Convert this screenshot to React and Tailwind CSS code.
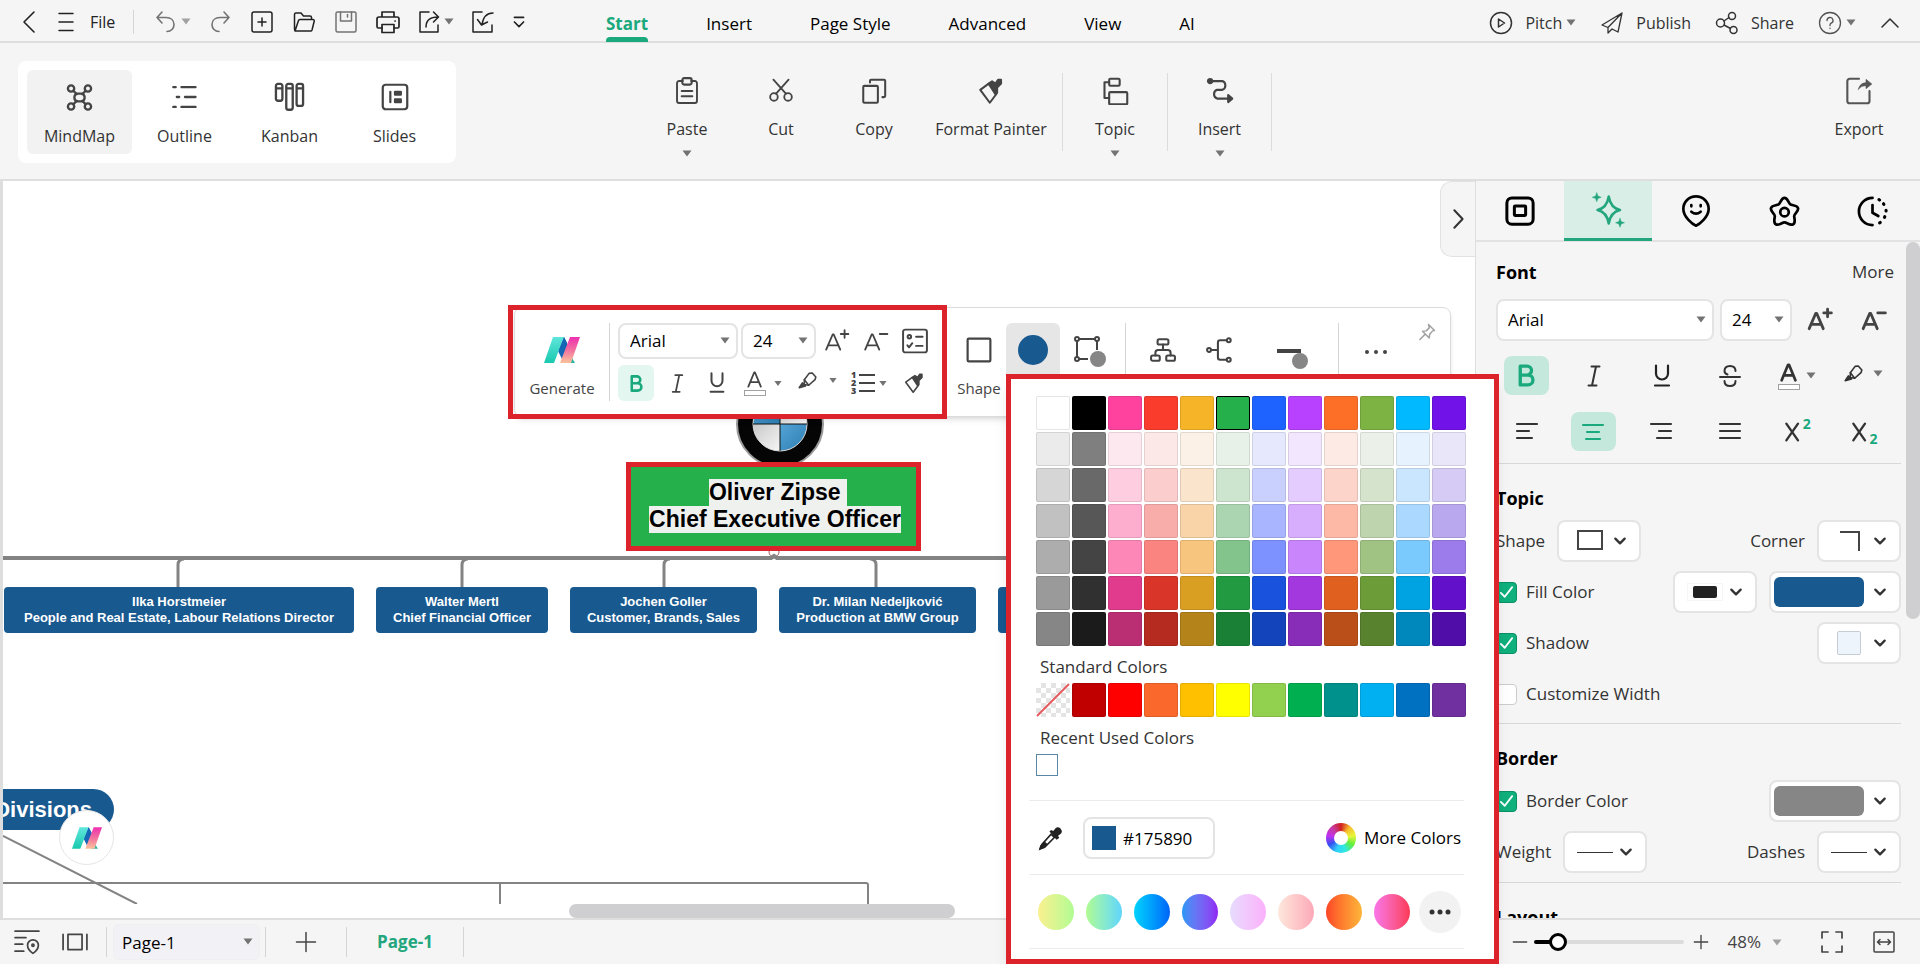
import { useState } from "react";

/**
 * Base icon wrapper. Every hand drawn icon below lives in a 24x24 box,
 * so a path only has to care about its own strokes.
 */
const Icon = ({ size = 24, sw = 1.5, className = "", children }) => (
  <svg
    width={size}
    height={size}
    viewBox="0 0 24 24"
    fill="none"
    stroke="currentColor"
    strokeWidth={sw}
    strokeLinecap="round"
    strokeLinejoin="round"
    className={`shrink-0 ${className}`}
    aria-hidden="true"
  >
    {children}
  </svg>
);

// Small filled triangle used by all the drop-downs
const Caret = ({ className = "text-neutral-500" }) => (
  <svg width="10" height="7" viewBox="0 0 10 7" fill="currentColor" className={`shrink-0 ${className}`} aria-hidden="true">
    <path d="M0.5 0.5h9L5 6.5z" />
  </svg>
);

const Chevron = () => (
  <Icon size={14} sw={4} className="text-[#333]">
    <path d="M4 8l8 8 8-8" />
  </Icon>
);

// Brand mark: teal left stroke, blue fold, pink right stroke
const Logo = ({ id, className }) => (
  <svg viewBox="0 0 36 26" className={className} aria-hidden="true">
    <defs>
      <linearGradient id={`${id}-teal`} x1="0" y1="0" x2="0" y2="1">
        <stop offset="0" stopColor="#5ee6dc" />
        <stop offset="1" stopColor="#19c9ae" />
      </linearGradient>
      <linearGradient id={`${id}-pink`} x1="0" y1="0" x2="0" y2="1">
        <stop offset="0" stopColor="#ee2fb0" />
        <stop offset="0.5" stopColor="#f2719f" />
        <stop offset="1" stopColor="#fbc39a" />
      </linearGradient>
    </defs>
    <path d="M24 14l7 12h-8z" fill="#2bb3a3" />
    <path d="M20 0l4 8-6 14-4-8z" fill="#1566b5" />
    <path d="M9 0h11L10 26H0z" fill={`url(#${id}-teal)`} />
    <path d="M20 0l3 6-5 13-3-6z" fill="#1566b5" />
    <path d="M26 0h10L27 26H16z" fill={`url(#${id}-pink)`} />
  </svg>
);

/* ---------- shared drawings ---------- */

const Brush = ({ size = 24 }) => (
  <Icon size={size} sw={1.8}>
    <path d="M2 10.500L9.500 5l7 9-6 8z" />
    <path d="M9.500 5l3-2 3 2 2.500-3.500h2.500V5L17 8.500v4.500l-1.500 1.500z" fill="currentColor" />
  </Icon>
);

const Highlighter = ({ size = 20 }) => (
  <Icon size={size} sw={2}>
    <path d="M8 11l6-8 4-.500 4.500 5-1 3.500-8 7-5.500-1z" />
    <path d="M8 11l5.500 7" />
    <path d="M5.500 15l4 4-8 2z" fill="currentColor" />
  </Icon>
);

const LetterA = ({ sw = 2, size = 24 }) => (
  <Icon size={size} sw={sw}>
    <path d="M4 20L11 3h1l7 17M6.500 14.500h10" />
  </Icon>
);

const FontUp = ({ sw = 1.8 }) => (
  <Icon size={26} sw={sw}>
    <path d="M2 20L8 6h1l6 14M4 16h9M19 2v7M15.500 5.500h7" />
  </Icon>
);

const FontDown = ({ sw = 1.8 }) => (
  <Icon size={26} sw={sw}>
    <path d="M2 20L8 6h1l6 14M4 16h9M15.500 5.500h7" />
  </Icon>
);

const Bold = ({ size = 24 }) => (
  <Icon size={size} sw={3.200}>
    <path d="M6 3h6.500a4.300 4.300 0 0 1 0 8.600H6zM6 11.600h7.500a4.600 4.600 0 0 1 0 9.400H6z" />
  </Icon>
);

const Italic = ({ size = 24 }) => (
  <Icon size={size} sw={2}>
    <path d="M9.500 2.500h8M6.500 21.500h8M14 2.500L10 21.500" />
  </Icon>
);

const Underline = ({ size = 24 }) => (
  <Icon size={size} sw={2.2}>
    <path d="M6 1.500V9.500a6 6 0 0 0 12 0V1.500M5 21.500h14" />
  </Icon>
);

/* ---------- header ---------- */

const IconButton = ({ label, className = "", children, ...rest }) => (
  <button type="button" aria-label={label} className={`flex items-center justify-center ${className}`} {...rest}>
    {children}
  </button>
);

const TABS = ["Start", "Insert", "Page Style", "Advanced", "View", "AI"];

const Header = () => {
  const [tab, setTab] = useState("Start");

  return (
    <header className="flex h-[43px] shrink-0 items-center border-b-2 border-[#dedede] text-[#222]">
      <div className="flex w-[606px] shrink-0 items-center pl-[17px] pt-0.5">
        <IconButton label="Back" className="w-6">
          <Icon sw={1.6}><path d="M17 2L7 12l10 10" /></Icon>
        </IconButton>
        <button type="button" className="ml-[13px] flex items-center gap-3">
          <Icon><path d="M5 3.500h14M5 12h14M5 20.500h14" /></Icon>
          File
        </button>
        <span className="ml-[18px] h-6 w-px bg-[#d5d5d5]" />
        <IconButton label="Undo" className="ml-5 w-6 text-neutral-500">
          <Icon sw={1.6}><path d="M8 2L3 7.500 8 13M3 7.500h9c5 0 8 3 8 7s-3 7-7 7" /></Icon>
        </IconButton>
        <IconButton label="Undo history" className="w-4"><Caret className="text-neutral-400" /></IconButton>
        <IconButton label="Redo" className="ml-3.5 w-6 text-neutral-500">
          <Icon sw={1.6}><path d="M16 2l5 5.500-5 5.500M21 7.500h-9c-5 0-8 3-8 7s3 7 7 7" /></Icon>
        </IconButton>
        <IconButton label="New" className="ml-[18px] w-6">
          <Icon><rect x="2" y="2" width="20" height="20" rx="2" /><path d="M12 8v8M8 12h8" /></Icon>
        </IconButton>
        <IconButton label="Open" className="ml-[18px] w-6">
          <Icon><path d="M2.500 19V4.500a1.500 1.500 0 0 1 1.500-1.500h5l2.500 3H18a1.500 1.500 0 0 1 1.500 1.500V9.500M3 21l3.500-10.500a1.500 1.500 0 0 1 1.500-1h13a1.300 1.300 0 0 1 1.200 1.800L20 20a1.500 1.500 0 0 1-1.500 1H4a1.500 1.500 0 0 1-1.500-1.500" /></Icon>
        </IconButton>
        <IconButton label="Save" className="ml-[18px] w-6 text-neutral-500">
          <Icon><rect x="2" y="2" width="20" height="20" rx="1.500" /><path d="M6.500 2v9h11V2M13.500 4.500V7" /></Icon>
        </IconButton>
        <IconButton label="Print" className="ml-[18px] w-6">
          <Icon sw={1.700}><path d="M6 7V2h12v5M6 18H2.500a1.500 1.500 0 0 1-1.500-1.500V9a2 2 0 0 1 2-2h18a2 2 0 0 1 2 2v7.500a1.500 1.500 0 0 1-1.500 1.500H18M19 11h.2" /><rect x="6" y="14.500" width="12" height="8" /></Icon>
        </IconButton>
        <IconButton label="Share file" className="ml-[17px] w-6">
          <Icon><path d="M12 2H3v20h18v-7M9 17c0-6 3-10 12-10M16.500 2l5 5-5 5" /></Icon>
        </IconButton>
        <IconButton label="Share file options" className="w-4"><Caret /></IconButton>
        <IconButton label="Import" className="ml-3.5 w-6">
          <Icon><path d="M11 2H2v20h19v-7M22 3c-6 0-10 4-11 12M6.500 9.500l4 5.500 6-3" /></Icon>
        </IconButton>
        <IconButton label="More commands" className="ml-3.5 w-5">
          <Icon size={22} sw={1.8}><path d="M7 7h10M7 12l5 5 5-5" /></Icon>
        </IconButton>
      </div>

      <nav className="flex h-full gap-[58px] text-[17px]">
        {TABS.map((name) => (
          <button
            key={name}
            type="button"
            onClick={() => setTab(name)}
            className={`relative flex h-full items-center pt-1.5 ${tab === name ? "font-bold text-[#19a97c]" : "text-black"}`}
          >
            {name}
            {tab === name && <span className="absolute inset-x-0 -bottom-px h-[5px] rounded-t bg-[#19a97c]" />}
          </button>
        ))}
      </nav>

      <div className="ml-auto flex items-center pr-[18px] pt-1 text-[#333]">
        <button type="button" className="flex items-center">
          <Icon><circle cx="12" cy="12" r="10.500" /><path d="M9.500 8l6 4-6 4z" /></Icon>
          <span className="ml-3">Pitch</span>
          <Caret className="ml-1 text-neutral-500" />
        </button>
        <button type="button" className="ml-6 flex items-center gap-3">
          <Icon sw={1.3}><path d="M22 2L2 14l6 2.500L22 2l-4 19-6-3M8 16.500V22l4-4" /></Icon>
          Publish
        </button>
        <button type="button" className="ml-6 flex items-center gap-3">
          <Icon><circle cx="5.500" cy="12" r="4" /><circle cx="17" cy="5" r="3.500" /><circle cx="18.500" cy="19" r="3.500" /><path d="M9 10l5-3.500M9 14l6.500 3.500" /></Icon>
          Share
        </button>
        <button type="button" aria-label="Help" className="ml-6 flex items-center gap-1 text-neutral-600">
          <Icon sw={1.3}><circle cx="12" cy="12" r="10.500" /><path d="M9 9.500a3 3 0 1 1 4.200 2.700c-.8.400-1.200.9-1.200 1.800v.5M12 17.200v.2" /></Icon>
          <Caret />
        </button>
        <IconButton label="Collapse ribbon" className="ml-[22px] w-6">
          <Icon sw={1.6}><path d="M4 16l8-8 8 8" /></Icon>
        </IconButton>
      </div>
    </header>
  );
};

/* ---------- ribbon ---------- */

const VIEWS = [
  {
    name: "MindMap",
    icon: (
      <Icon size={27} sw={2.1}>
        <circle cx="4.500" cy="4" r="2.800" /><circle cx="19.500" cy="4" r="2.800" /><circle cx="4.500" cy="20" r="2.800" /><circle cx="19.500" cy="20" r="2.800" />
        <rect x="7.500" y="8.500" width="9" height="7" rx="3" /><path d="M6.500 6l3 3M17.500 6l-3 3M6.500 18l3-3M17.500 18l-3-3" />
      </Icon>
    ),
  },
  {
    name: "Outline",
    icon: <Icon size={28} sw={2}><path d="M2 3.500h2M9 3.500h12M5 12h2M12 12h9M2 20.500h2M9 20.500h12" /></Icon>,
  },
  {
    name: "Kanban",
    icon: (
      <Icon size={31} sw={1.8}>
        <rect x="1.500" y="1.500" width="5" height="13" rx="1.500" /><rect x="9.500" y="1.500" width="5" height="20" rx="1.500" /><rect x="17.500" y="1.500" width="5" height="17" rx="1.500" />
        <path d="M2 5h4M10 5h4M18 5h4" />
      </Icon>
    ),
  },
  {
    name: "Slides",
    icon: (
      <Icon size={28} sw={1.9}>
        <rect x="1.500" y="1.500" width="21" height="21" rx="2.500" /><path d="M8 7.500v9" />
        <rect x="12" y="7.500" width="5" height="2.500" fill="currentColor" /><rect x="12" y="14" width="5" height="2.500" fill="currentColor" />
      </Icon>
    ),
  },
];

const TOOLS = [
  {
    name: "Paste", width: "w-[94px]", menu: true,
    icon: <Icon size={28} sw={1.8}><path d="M8 3.500H4.500a2 2 0 0 0-2 2V21a2 2 0 0 0 2 2h15a2 2 0 0 0 2-2V5.500a2 2 0 0 0-2-2H16" transform="translate(1.200 0) scale(.9 .97)" /><rect x="8" y="1" width="8" height="5.500" rx="1.500" /><path d="M7.500 12h9M7.500 16.500h9" /></Icon>,
  },
  {
    name: "Cut", width: "w-[94px]",
    icon: <Icon size={26} sw={1.700}><circle cx="5.500" cy="17.500" r="3.500" /><circle cx="18.500" cy="17.500" r="3.500" /><path d="M5 1.500l11.500 13M19 1.500L7.500 14.500" /></Icon>,
  },
  {
    name: "Copy", width: "w-[92px]",
    icon: <Icon size={27} sw={1.8}><rect x="2" y="7" width="13" height="15" rx="1" /><path d="M8 4V2.500a1 1 0 0 1 1-1h11.500a1 1 0 0 1 1 1V16a1 1 0 0 1-1 1H19" /></Icon>,
  },
  { name: "Format Painter", width: "w-[142px]", icon: <Brush size={27} /> },
  {
    name: "Topic", width: "w-[104px]", menu: true, divided: true,
    icon: <Icon size={28} sw={1.8}><rect x="7" y="1.500" width="9" height="6" rx="1" /><rect x="7" y="13" width="15.500" height="10.500" rx="1" /><path d="M7 4.500H3V18h4" /></Icon>,
  },
  {
    name: "Insert", width: "w-[103px]", menu: true, divided: true,
    icon: <Icon size={28} sw={1.8}><circle cx="3.500" cy="3.500" r="1.800" fill="currentColor" /><path d="M4 3.500h10a4 4 0 0 1 0 7.500H9.500a4 4 0 0 0 0 7.500H20" /><path d="M19 15.500l3.500 3-3.500 3z" fill="currentColor" /></Icon>,
  },
];

const Ribbon = () => {
  const [view, setView] = useState("MindMap");

  return (
    <section aria-label="Ribbon" className="flex h-[138px] shrink-0 items-start border-b-2 border-[#dedede] text-[#333]">
      <div className="w-[640px] shrink-0 pl-[18px] pt-[18px]">
        <div className="inline-flex rounded-lg bg-white p-[9px]">
          {VIEWS.map(({ name, icon }) => (
            <button
              key={name}
              type="button"
              onClick={() => setView(name)}
              className={`flex h-[84px] w-[105px] flex-col items-center justify-between rounded-md pb-1.5 pt-[11px] ${view === name ? "bg-[#f2f2f2]" : ""}`}
            >
              <span className="flex h-8 items-center text-[#444]">{icon}</span>
              {name}
            </button>
          ))}
        </div>
      </div>

      <div className="flex pt-[30px]">
        {TOOLS.map(({ name, width, icon, menu, divided }) => (
          <div key={name} className={`flex ${divided ? "border-l border-[#dcdcdc]" : ""} ${name === "Insert" ? "border-r" : ""}`}>
            <button type="button" className={`flex h-[78px] flex-col items-center ${width}`}>
              <span className="mt-1 flex h-7 items-center text-[#444]">{icon}</span>
              <span className="mt-3 whitespace-nowrap leading-6">{name}</span>
              {menu && <Caret className="mt-[9px] text-neutral-500" />}
            </button>
          </div>
        ))}
      </div>

      <button type="button" className="ml-auto mr-[21px] flex w-20 flex-col items-center pt-[34px]">
        <Icon size={28} sw={1.8} className="text-[#555]">
          <path d="M12 1.500H4a2 2 0 0 0-2 2v17a2 2 0 0 0 2 2h15a2 2 0 0 0 2-2V12" />
          <path d="M11.500 10.500c1-4 3.500-5.500 6.500-5.500V2l5 4-5 4V7.500c-3 0-5 1-6.500 3z" fill="currentColor" strokeWidth="0.5" />
        </Icon>
        <span className="mt-3 leading-6">Export</span>
      </button>
    </section>
  );
};

/* ---------- canvas ---------- */

const NODES = [
  { name: "Ilka Horstmeier", role: "People and Real Estate, Labour Relations Director", box: "left-px w-[350px]" },
  { name: "Walter Mertl", role: "Chief Financial Officer", box: "left-[373px] w-[172px]" },
  { name: "Jochen Goller", role: "Customer, Brands, Sales", box: "left-[567px] w-[187px]" },
  { name: "Dr. Milan Nedeljković", role: "Production at BMW Group", box: "left-[776px] w-[197px]" },
  { name: "", role: "", box: "left-[995px] w-[190px]" },
];

const Canvas = () => (
  <main className="relative min-w-0 flex-1 overflow-hidden border-l-[3px] border-[#dedede] bg-white font-['Liberation_Sans',Arial,sans-serif]">
    {/* connector lines */}
    <svg className="absolute left-0 top-0" width="1200" height="723" fill="none" stroke="#838383" aria-hidden="true">
      <path d="M0 377h1200" strokeWidth="4" />
      <path d="M175 406v-22q0-6 6-6M459 406v-22q0-6 6-6M661 406v-22q0-6 6-6M873 406v-22q0-6-6-6" strokeWidth="3" />
      <circle cx="771" cy="371" r="5" stroke="#b05a5a" strokeWidth="1" />
      <path d="M764 378h14l-7-5z" fill="#838383" strokeWidth="1" />
      <path d="M768 380h6l-3-2z" fill="#fff" stroke="#fff" strokeWidth="1" />
      <path d="M0 655l134 68M0 702h863q2 0 2 2v19M497 702v21" strokeWidth="2" />
    </svg>

    {/* company roundel, partly behind the floating toolbar */}
    <svg className="absolute left-[732px] top-[198px]" width="90" height="90" viewBox="-45 -45 90 90" aria-hidden="true">
      <defs>
        <linearGradient id="sky" x1="0" y1="0" x2="1" y2="1"><stop offset="0" stopColor="#55a4d6" /><stop offset="1" stopColor="#2c7db2" /></linearGradient>
        <linearGradient id="snow" x1="0" y1="0" x2="1" y2="1"><stop offset="0" stopColor="#c8c8c8" /><stop offset="1" stopColor="#f6f6f6" /></linearGradient>
      </defs>
      <circle r="43" fill="#050505" stroke="#9a9a9a" strokeWidth="2" />
      <path d="M0 0h-27a27 27 0 0 1 27-27z" fill="url(#sky)" />
      <path d="M0 0v-27a27 27 0 0 1 27 27z" fill="url(#snow)" />
      <path d="M0 0h27a27 27 0 0 1-27 27z" fill="url(#sky)" />
      <path d="M0 0v27a27 27 0 0 1-27-27z" fill="url(#snow)" />
      <circle r="27" fill="none" stroke="#ddd" />
      <path d="M-27 0h54M0-27v54" stroke="#111" />
    </svg>

    <div className="absolute left-[623px] top-[281px] flex h-[89px] w-[295px] flex-col items-center justify-center border-[5px] border-[#dc222b] bg-[#26b04b] pb-0.5 pl-[3px] text-center text-[23px] font-bold leading-[27px] text-black">
      <span className="-mr-1.5 whitespace-pre bg-[#eff1ef]">{"Oliver Zipse "}</span>
      <span className="whitespace-nowrap bg-[#eff1ef]">Chief Executive Officer</span>
    </div>

    {NODES.map(({ name, role, box }) => (
      <div
        key={box}
        className={`absolute top-[406px] flex h-[46px] flex-col items-center justify-center whitespace-nowrap rounded-sm bg-[#185990] text-[13px] font-bold leading-4 text-white ${box}`}
      >
        <span>{name}</span>
        <span>{role}</span>
      </div>
    ))}

    <div className="absolute -left-10 top-[608px] flex h-[41px] w-[151px] items-center justify-end rounded-r-full bg-[#185990] pr-[22px] text-[22px] font-bold text-white">
      Divisions
    </div>
    <button type="button" aria-label="AI assistant" className="absolute left-14 top-[629px] flex h-[55px] w-[55px] items-center justify-center rounded-full border border-neutral-200 bg-white">
      <Logo id="bubble" className="h-[22px] w-[30px]" />
    </button>

    {/* horizontal scrollbar */}
    <div className="absolute bottom-0 left-[566px] h-3.5 w-[386px] rounded-full bg-[#cfcfd1]" />

    <button type="button" aria-label="Hide panel" className="absolute right-0 top-0 flex h-[76px] w-[35px] items-center justify-center rounded-l-xl border border-r-0 border-[#e2e2e2] bg-[#f5f5f5] text-[#333]">
      <Icon size={22} sw={2.2}><path d="M8 2.500l9 9.500-9 9.500" /></Icon>
    </button>
  </main>
);

/* ---------- format panel ---------- */

const SelectBox = ({ label, options, className = "" }) => (
  <div className={`relative rounded-lg border-2 border-[#e4e4e4] bg-white text-[17px] text-black ${className}`}>
    <select aria-label={label} className="h-full w-full appearance-none bg-transparent pl-2.5 outline-none">
      {options.map((o) => <option key={o}>{o}</option>)}
    </select>
    <Caret className="pointer-events-none absolute right-1.5 top-1/2 -mt-1 text-neutral-500" />
  </div>
);

// Drop-down that previews its value as a drawing instead of text
const PreviewSelect = ({ label, wide, className = "", children }) => (
  <button
    type="button"
    aria-label={label}
    aria-haspopup="listbox"
    className={`flex h-[42px] shrink-0 items-center justify-between rounded-lg border-2 border-[#e4e4e4] bg-white pr-3 ${wide ? "w-[132px] pl-[3px]" : "w-[84px] pl-3"} ${className}`}
  >
    {children}
    <Chevron />
  </button>
);

const Check = ({ label, defaultChecked }) => (
  <label className="flex items-center gap-[9px]">
    <span className="relative flex">
      <input
        type="checkbox"
        defaultChecked={defaultChecked}
        className="peer size-[21px] appearance-none rounded border border-[#ccc] bg-white checked:border-[#0b8f66] checked:bg-[#0fb07c]"
      />
      <Icon size={17} sw={2.6} className="pointer-events-none absolute left-0.5 top-0.5 hidden text-white peer-checked:block">
        <path d="M4 12.500l5.500 5.500L20 4.500" />
      </Icon>
    </span>
    {label}
  </label>
);

const PANEL_TABS = [
  { name: "Page", icon: <Icon size={30} sw={2.4}><rect x="1.500" y="1.500" width="21" height="21" rx="4" /><rect x="7.500" y="8" width="9" height="7.500" rx="0.500" /></Icon> },
  {
    name: "Style",
    icon: (
      <Icon size={36} sw={1.7}>
        <path d="M12.500 3c.8 5 3 8 7.500 9-4.500 1-6.700 4-7.500 9-.8-5-3-8-7.500-9 4.500-1 6.700-4 7.500-9z" />
        <path d="M4.500.500l.8 2.200 2.200.8-2.200.8-.8 2.200-.8-2.200-2.200-.8 2.200-.8zM20 17.500l.8 2.200 2.200.8-2.200.8-.8 2.200-.8-2.200-2.200-.8 2.200-.8z" fill="currentColor" strokeWidth="0.300" />
      </Icon>
    ),
  },
  { name: "Mark", icon: <Icon size={32} sw={2}><path d="M12 23c-2.500-1-9.500-6.500-9.500-12.500a9.500 9.500 0 0 1 19 0C21.500 16.500 14.500 22 12 23z" /><path d="M8.500 7.500v1M15.500 7.500v1M8.500 12.500q3.500 3 7 0" /></Icon> },
  { name: "Clipart", icon: <Icon size={31} sw={2.1}><path d="M12 1.500c2.500 0 3 4 4.500 5s5.500.500 6 3-3 4-3 6 1.500 5.500-1 6.500-4.500-1.500-6.500-1.500S8 23 5.500 22s-1-4.500-1-6.500-3.500-3.500-3-6 4.500-2 6-3 2-5 4.500-5z" /><circle cx="12" cy="12.500" r="3.300" /></Icon> },
  { name: "History", icon: <Icon size={31} sw={2.1}><path d="M12 1.500a10.500 10.500 0 1 0 0 21M12 7v6l4.500 2.500" /><path d="M17 2.800l.5.300M20.500 6l.3.500M22.500 11v.6M21.500 16l-.2.500M18 20.500l-.5.300" strokeWidth="2.400" /></Icon> },
];

const FormatPanel = () => {
  const [active, setActive] = useState("Style");

  return (
    <aside className="relative flex w-[445px] shrink-0 flex-col overflow-hidden border-l border-[#dedede] text-[17px] leading-6 text-[#333]">
      <div className="flex h-[61px] shrink-0 border-b-2 border-[#e2e2e2]">
        {PANEL_TABS.map(({ name, icon }) => (
          <IconButton
            key={name}
            label={name}
            onClick={() => setActive(name)}
            className={`h-[60px] w-[88px] ${active === name ? "border-b-[3px] border-[#23a67d] bg-[#daeee8] text-[#23a67d]" : "text-black"}`}
          >
            {icon}
          </IconButton>
        ))}
      </div>

      <div className="min-h-0 flex-1 overflow-hidden pl-5 pr-[19px]">
        {/* Font */}
        <div className="flex h-[57px] items-center justify-between pr-[7px] pt-0.5">
          <h2 className="text-lg font-bold leading-6 text-black">Font</h2>
          <button type="button">More</button>
        </div>
        <div className="flex items-center">
          <SelectBox label="Font family" options={["Arial", "Roboto"]} className="h-[42px] w-[219px]" />
          <SelectBox label="Font size" options={["24", "18", "12"]} className="ml-1.5 h-[42px] w-[72px]" />
          <IconButton label="Increase font size" className="ml-0.5 w-[54px] text-[#444]"><FontUp sw={2.6} /></IconButton>
          <IconButton label="Decrease font size" className="w-[54px] text-[#444]"><FontDown sw={2.6} /></IconButton>
        </div>

        <div className="mt-[15px] grid h-[39px] grid-cols-6 pr-1">
          <IconButton label="Bold" className="ml-2 w-[45px] rounded-lg bg-[#c4e8dc] text-[#19a97c]"><Bold size={25} /></IconButton>
          <IconButton label="Italic" className="pr-1"><Italic size={24} /></IconButton>
          <IconButton label="Underline" className="pr-0.5 text-[#222]"><Underline size={24} /></IconButton>
          <IconButton label="Strikethrough">
            <Icon size={24} sw={2}><path d="M17.500 7c0-3-2-5-5.500-5S6.500 4 6.500 7c0 2 1.500 3 3 3.500M17.500 17c0 3-2 5-5.500 5s-5.500-2-5.500-5M2 13h20" /></Icon>
          </IconButton>
          <IconButton label="Font colour" className="gap-1.5">
            <span className="flex flex-col items-center"><LetterA size={22} sw={3} /><span className="h-1.5 w-[22px] border border-neutral-400 bg-white" /></span>
            <Caret />
          </IconButton>
          <IconButton label="Highlight" className="gap-2.5 pb-1"><Highlighter size={19} /><Caret /></IconButton>
        </div>

        <div className="mt-[17px] grid h-[39px] grid-cols-6 pr-1">
          <IconButton label="Align left"><Icon sw={2.1} className="-ml-1"><path d="M2 4h20M2 11h12M2 18h15" /></Icon></IconButton>
          <IconButton label="Align centre" className="ml-2 w-[45px] rounded-lg bg-[#c4e8dc] text-[#19a97c]"><Icon sw={2.1}><path d="M2 5h20M6 12h12M5 19h14" /></Icon></IconButton>
          <IconButton label="Align right"><Icon sw={2.1} className="-ml-1"><path d="M2 4h20M10 11h12M8 18h14" /></Icon></IconButton>
          <IconButton label="Justify"><Icon sw={2.1}><path d="M2 4h20M2 11h20M2 18h20" /></Icon></IconButton>
          <IconButton label="Superscript" className="font-bold">
            <Icon size={20} sw={2.8}><path d="M4 2l14 20M18 2L4 22" /></Icon>
            <span className="-mt-4 text-sm text-[#19a97c]">2</span>
          </IconButton>
          <IconButton label="Subscript" className="font-bold">
            <Icon size={20} sw={2.8}><path d="M4 2l14 20M18 2L4 22" /></Icon>
            <span className="mt-3.5 text-sm text-[#19a97c]">2</span>
          </IconButton>
        </div>

        {/* Topic */}
        <section className="mt-3 border-t border-[#d8d8d8] pt-[22px]">
          <h2 className="text-lg font-bold leading-6 text-black">Topic</h2>
          <div className="mt-2.5 flex h-[42px] items-center">
            Shape
            <PreviewSelect label="Shape" className="ml-3">
              <svg width="28" height="22" fill="none" stroke="#444" strokeWidth="2" className="ml-1.5"><rect x="1" y="1" width="24" height="18" /></svg>
            </PreviewSelect>
            <span className="ml-auto">Corner</span>
            <PreviewSelect label="Corner" className="ml-3">
              <svg width="28" height="22" fill="none" stroke="#444" strokeWidth="2" className="ml-2"><path d="M1 2h19v19" /></svg>
            </PreviewSelect>
          </div>
          <div className="mt-[9px] flex h-[42px] items-center">
            <Check label="Fill Color" defaultChecked />
            <PreviewSelect label="Fill pattern" className="ml-auto">
              <span className="border border-neutral-100 px-[5px] py-0.5"><span className="block h-3 w-6 rounded-xs bg-[#222]" /></span>
            </PreviewSelect>
            <PreviewSelect label="Fill color" wide className="ml-3"><span className="h-[30px] w-[90px] rounded-md bg-[#185990]" /></PreviewSelect>
          </div>
          <div className="mt-[9px] flex h-[42px] items-center justify-between">
            <Check label="Shadow" defaultChecked />
            <PreviewSelect label="Shadow style">
              <span className="ml-1.5 size-6 rounded-xs border border-[#c5ccd4] bg-[#edf4fc]" />
            </PreviewSelect>
          </div>
          <div className="mt-[9px] flex h-[42px] items-center">
            <Check label="Customize Width" />
          </div>
        </section>

        {/* Border */}
        <section className="mt-2 border-t border-[#d8d8d8] pt-[22px]">
          <h2 className="text-lg font-bold leading-6 text-black">Border</h2>
          <div className="mt-2.5 flex h-[42px] items-center justify-between">
            <Check label="Border Color" defaultChecked />
            <PreviewSelect label="Border color" wide><span className="h-[30px] w-[90px] rounded-md bg-[#868686]" /></PreviewSelect>
          </div>
          <div className="mt-[9px] flex h-[42px] items-center">
            Weight
            <PreviewSelect label="Weight" className="ml-3"><span className="h-px w-9 bg-[#333]" /></PreviewSelect>
            <span className="ml-auto">Dashes</span>
            <PreviewSelect label="Dashes" className="ml-3"><span className="h-px w-9 bg-[#333]" /></PreviewSelect>
          </div>
        </section>

        <section className="mt-[9px] border-t border-[#d8d8d8] pt-[22px]">
          <h2 className="text-lg font-bold leading-6 text-black">Layout</h2>
        </section>
      </div>

      <div className="absolute right-0 top-[61px] h-[377px] w-3.5 rounded-full bg-[#cfcfd1]" />
    </aside>
  );
};

/* ---------- status bar ---------- */

const Divider = ({ className = "h-[30px]" }) => <span className={`w-px shrink-0 bg-[#d5d5d5] ${className}`} />;

const StatusBar = () => {
  const [zoom, setZoom] = useState(48);

  return (
    <footer className="flex h-[46px] shrink-0 items-center border-t-2 border-[#dedede] text-[17px] text-[#444]">
      <IconButton label="Locate" className="ml-3.5 w-[26px]">
        <Icon size={26} sw={1.6}><path d="M1 2h22M1 8h10M1 14h7M1 20.500h8" /><path d="M17.500 22.500c-3-2-5-4.500-5-7.500a5 5 0 0 1 10 0c0 3-2 5.500-5 7.500z" /><circle cx="17.500" cy="15" r="1" /></Icon>
      </IconButton>
      <IconButton label="Presentation" className="ml-[22px] w-[26px]">
        <Icon size={26} sw={1.6}><rect x="5.500" y="5" width="13" height="14" /><path d="M1 5v14M23 5v14" /></Icon>
      </IconButton>
      <Divider className="ml-[18px] h-[30px]" />
      <div className="relative ml-1.5 h-9 w-[147px] rounded-md border border-[#efeff2] bg-[#f2f1f5] text-black">
        <select aria-label="Page" className="h-full w-full appearance-none bg-transparent pl-2 pt-0.5 outline-none">
          <option>Page-1</option>
        </select>
        <Caret className="pointer-events-none absolute right-1.5 top-1/2 -mt-1 text-neutral-500" />
      </div>
      <Divider className="ml-[5px] h-[30px]" />
      <IconButton label="Add page" className="w-20">
        <Icon sw={1.5}><path d="M12 2.500v19M2.500 12h19" /></Icon>
      </IconButton>
      <Divider />
      <button type="button" className="w-[116px] font-bold text-[#23a67d]">Page-1</button>
      <Divider />

      <div className="ml-auto flex items-center pr-6">
        <IconButton label="Zoom out" className="w-4" onClick={() => setZoom(zoom - 10)}>
          <Icon size={16} sw={2}><path d="M2 12h20" /></Icon>
        </IconButton>
        <input
          type="range"
          aria-label="Zoom"
          min="0"
          max="450"
          value={zoom}
          onChange={(e) => setZoom(Number(e.target.value))}
          className="mx-1.5 h-1 w-[150px] appearance-none rounded-full bg-[linear-gradient(90deg,#000_12%,#dcdcdc_12%)] [&::-webkit-slider-thumb]:size-[18px] [&::-webkit-slider-thumb]:appearance-none [&::-webkit-slider-thumb]:rounded-full [&::-webkit-slider-thumb]:border-[3px] [&::-webkit-slider-thumb]:border-black [&::-webkit-slider-thumb]:bg-white"
        />
        <IconButton label="Zoom in" className="ml-[3px] w-4" onClick={() => setZoom(zoom + 10)}>
          <Icon size={16} sw={2}><path d="M2 12h20M12 2v20" /></Icon>
        </IconButton>
        <button type="button" className="ml-[18px] flex items-center gap-[11px]">
          {zoom}%
          <Caret className="text-neutral-400" />
        </button>
        <IconButton label="Full screen" className="ml-[38px] w-6">
          <Icon sw={1.7}><path d="M2 8V2h6M16 2h6v6M22 16v6h-6M8 22H2v-6" /></Icon>
        </IconButton>
        <IconButton label="Fit width" className="ml-7 w-6">
          <Icon sw={1.5}><rect x="2" y="2" width="20" height="20" rx="1" /><path d="M6 12h12M8 9.500L5.500 12 8 14.500M16 9.500l2.500 2.500-2.500 2.500" /></Icon>
        </IconButton>
      </div>
    </footer>
  );
};

/* ---------- floating toolbar ---------- */

const FloatingToolbar = () => (
  <>
    <div className="absolute left-[514px] top-[307px] flex h-[110px] w-[937px] rounded-lg border border-[#dcdcdc] bg-white text-[15px] text-[#444] shadow-md">
      <button type="button" className="flex w-[94px] flex-col items-center pt-[29px]">
        <Logo id="generate" className="h-[26px] w-9" />
        <span className="mt-[15px] leading-5">Generate</span>
      </button>
      <Divider className="mt-[15px] h-[78px]" />

      <div className="ml-2 mt-[15px] flex w-[316px] flex-col gap-1.5">
        <div className="flex h-9 items-center">
          <SelectBox label="Font family" options={["Arial", "Roboto"]} className="h-9 w-[120px]" />
          <SelectBox label="Font size" options={["24", "18", "12"]} className="ml-[3px] mr-0.5 h-9 w-[75px]" />
          <IconButton label="Increase font size" className="w-[38px]"><FontUp sw={1.7} /></IconButton>
          <IconButton label="Decrease font size" className="w-[39px]"><FontDown sw={1.7} /></IconButton>
          <IconButton label="Text options" className="w-[39px]">
            <Icon size={26} sw={1.8}><rect x="1" y="1.500" width="22" height="21" rx="2" /><circle cx="6.800" cy="8" r="1.600" /><path d="M13 8h6M13 16.500h6M5 16l1.500 1.800L9.500 14" /></Icon>
          </IconButton>
        </div>
        <div className="flex h-9 items-center">
          <IconButton label="Bold" className="size-9 rounded-md bg-[#e3f6f0] text-[#19a97c]"><Bold size={19} /></IconButton>
          <IconButton label="Italic" className="w-[46px]"><Italic size={21} /></IconButton>
          <IconButton label="Underline" className="w-[34px]"><Underline size={22} /></IconButton>
          <IconButton label="Font colour" className="w-[58px] gap-2">
            <span className="flex flex-col items-center"><LetterA size={20} sw={2.2} /><span className="h-1.5 w-[22px] border border-neutral-400" /></span>
            <Caret className="w-2 text-neutral-500" />
          </IconButton>
          <IconButton label="Highlight" className="w-[51px] gap-3 pb-1.5"><Highlighter size={19} /><Caret className="w-2 text-neutral-500" /></IconButton>
          <IconButton label="Numbering" className="w-[52px] gap-0.5">
            <svg width="26" height="24" aria-hidden="true" stroke="currentColor" strokeWidth="2">
              <path d="M8 4h16M8 12h16M8 20h16" />
              <g fill="currentColor" stroke="none" fontSize="9" fontWeight="800">
                <text x="0" y="7">1</text><text x="0" y="15">2</text><text x="0" y="23">3</text>
              </g>
            </svg>
            <Caret className="w-2 text-neutral-500" />
          </IconButton>
          <IconButton label="Format painter" className="w-[38px]"><Brush size={21} /></IconButton>
        </div>
      </div>

      <button type="button" className="ml-[18px] flex w-[54px] flex-col items-center pt-[29px]">
        <Icon size={26} sw={2}><rect x="1.500" y="1.500" width="21" height="21" rx="1" /></Icon>
        <span className="mt-[15px] leading-5">Shape</span>
      </button>
      <IconButton label="Fill" className="mt-[15px] h-[78px] w-[54px] rounded-md bg-[#e6e6e6] pb-6"><span className="size-[30px] rounded-full bg-[#185990]" /></IconButton>
      <IconButton label="Border" className="mt-[15px] h-[78px] w-[65px] pb-5 pr-1">
        <svg width="34" height="32" fill="none" stroke="currentColor" strokeWidth="2" aria-hidden="true">
          <path d="M5 3h16M3 5v16M23 5v9M5 23h9" /><circle cx="3" cy="3" r="2" /><circle cx="23" cy="3" r="2" /><circle cx="3" cy="23" r="2" />
          <circle cx="24" cy="23" r="8" fill="#868686" stroke="none" />
        </svg>
      </IconButton>
      <Divider className="mt-[15px] h-[78px]" />
      <IconButton label="Layout" className="ml-[9px] mt-[15px] h-[78px] w-[56px] pb-6">
        <Icon size={26} sw={1.9}><rect x="7" y="2" width="10" height="5" rx="1.500" /><rect x="1" y="17" width="8" height="5" rx="1.500" /><rect x="15" y="17" width="8" height="5" rx="1.500" /><path d="M12 7v5M5 17v-2.500q0-2.500 2.500-2.500h9q2.500 0 2.500 2.500V17" /></Icon>
      </IconButton>
      <IconButton label="Branch" className="mt-[15px] h-[78px] w-14 pb-6">
        <Icon size={26} sw={1.9}><circle cx="2.800" cy="12" r="1.800" /><circle cx="21" cy="3" r="1.800" /><circle cx="21" cy="21" r="1.800" /><path d="M5 12h6M19 3h-6q-2 0-2 2v14q0 2 2 2h6" /></Icon>
      </IconButton>
      <IconButton label="Line" className="mt-[15px] h-[78px] w-[91px] pb-[11px]">
        <svg width="34" height="24" aria-hidden="true"><path d="M1 4h24v4H1z" fill="#444" /><circle cx="24" cy="16" r="8" fill="#868686" /></svg>
      </IconButton>
      <Divider className="mt-[15px] h-[78px]" />
      <IconButton label="More" className="mt-[15px] h-[78px] w-[74px] pb-5">
        <svg width="24" height="6" fill="currentColor" aria-hidden="true"><circle cx="3" cy="3" r="2" /><circle cx="12" cy="3" r="2" /><circle cx="21" cy="3" r="2" /></svg>
      </IconButton>
      <IconButton label="Pin" className="mt-3 h-6 w-7 text-neutral-400">
        <Icon size={18} sw={2}><path d="M14 2l8 8-2.500.500-4 4.500-.500 5-9-9 5-.500 4-4zM9 15.500L2.500 22" /></Icon>
      </IconButton>
    </div>
    <div className="pointer-events-none absolute left-[508px] top-[305px] h-[114px] w-[439px] border-[5px] border-[#dc222b]" />
  </>
);

/* ---------- colour picker ---------- */

const THEME_COLORS = [
  "bg-[#ffffff]", "bg-[#000000]", "bg-[#ff429d]", "bg-[#fa3c2d]", "bg-[#f6b429]", "bg-[#26b04b]", "bg-[#1e62ff]", "bg-[#b841ff]", "bg-[#fd6f27]", "bg-[#7cb342]", "bg-[#00b9ff]", "bg-[#7012e8]",
  "bg-[#ebebeb]", "bg-[#7f7f7f]", "bg-[#fee8f0]", "bg-[#fde8e8]", "bg-[#fcf1e6]", "bg-[#e8f1e8]", "bg-[#e6e8fe]", "bg-[#f1e6fe]", "bg-[#feeae4]", "bg-[#ebf1e8]", "bg-[#e6f2fe]", "bg-[#eae6f9]",
  "bg-[#d6d6d6]", "bg-[#696969]", "bg-[#fecde0]", "bg-[#fbcdcd]", "bg-[#fae4cb]", "bg-[#cde4ce]", "bg-[#c9d0fe]", "bg-[#e4cdfe]", "bg-[#fdd4ca]", "bg-[#d6e3cc]", "bg-[#cae5fe]", "bg-[#d5cbf4]",
  "bg-[#c1c1c1]", "bg-[#575757]", "bg-[#fdadce]", "bg-[#f9adab]", "bg-[#f8d4a8]", "bg-[#abd5b1]", "bg-[#a9b5fe]", "bg-[#d7adfe]", "bg-[#feb8a6]", "bg-[#bed4ae]", "bg-[#aad8fe]", "bg-[#b9a8ee]",
  "bg-[#adadad]", "bg-[#444444]", "bg-[#fd88b8]", "bg-[#f98480]", "bg-[#f7c57d]", "bg-[#82c48c]", "bg-[#7d92fe]", "bg-[#c885fc]", "bg-[#ff987a]", "bg-[#a0c384]", "bg-[#7bcafd]", "bg-[#9c7bea]",
  "bg-[#9a9a9a]", "bg-[#303030]", "bg-[#e03b8c]", "bg-[#d93529]", "bg-[#d89f22]", "bg-[#219a42]", "bg-[#1953dd]", "bg-[#a338de]", "bg-[#e06020]", "bg-[#6c9c38]", "bg-[#00a3e2]", "bg-[#6210ca]",
  "bg-[#868686]", "bg-[#1b1b1b]", "bg-[#ba2f73]", "bg-[#b52b20]", "bg-[#b4831a]", "bg-[#1a8036]", "bg-[#1344bb]", "bg-[#882db8]", "bg-[#bb4f19]", "bg-[#58822d]", "bg-[#0087bc]", "bg-[#510da8]",
];

const STANDARD_COLORS = [
  "bg-[#c00000]", "bg-[#ff0000]", "bg-[#fb682b]", "bg-[#ffc000]", "bg-[#ffff00]", "bg-[#92d050]",
  "bg-[#00b050]", "bg-[#00918c]", "bg-[#00b0f0]", "bg-[#0070c0]", "bg-[#7030a0]",
];

const GRADIENTS = [
  "from-[#f9f08f] to-[#b0fb93]",
  "from-[#b0fb8f] to-[#5fd5fb]",
  "from-[#03d3fc] to-[#0563f8]",
  "from-[#2196f5] to-[#8f22f3]",
  "from-[#e6dcfd] to-[#fbb0fb]",
  "from-[#fde8dc] to-[#fba9b8]",
  "from-[#fb4226] to-[#fbb53a]",
  "from-[#f975ea] to-[#fb3754]",
];

const ColorPicker = () => {
  const [selected, setSelected] = useState("bg-[#26b04b]");
  const [hex, setHex] = useState("#175890");

  return (
    <div
      role="dialog"
      aria-label="Fill color"
      className="absolute bottom-0 left-[1006px] top-[374px] w-[493px] overflow-hidden border-[5px] border-[#dc222b] bg-white pl-[18px] pr-[30px] pt-[17px] text-[17px] text-[#333] shadow-lg"
    >
      <div className="pl-[7px]">
        <div className="grid grid-cols-[repeat(12,34px)] gap-0.5">
          {THEME_COLORS.map((c) => (
            <button
              key={c}
              type="button"
              aria-label={c.slice(4, 11)}
              onClick={() => setSelected(c)}
              className={`h-[34px] rounded-xs border ${selected === c ? "border-black" : "border-black/10"} ${c}`}
            />
          ))}
        </div>

        <h3 className="ml-1 mt-2.5 leading-[22px]">Standard Colors</h3>
        <div className="mt-[5px] grid grid-cols-[repeat(12,34px)] gap-0.5">
          <button type="button" aria-label="No color" className="h-[34px] bg-[repeating-conic-gradient(#e4e4e4_0_25%,#fff_0_50%)] bg-[length:10px_10px]">
            <svg viewBox="0 0 34 34" aria-hidden="true"><path d="M1 33L33 1" stroke="#e4595c" strokeWidth="2" /></svg>
          </button>
          {STANDARD_COLORS.map((c) => (
            <button key={c} type="button" aria-label={c.slice(4, 11)} onClick={() => setSelected(c)} className={`h-[34px] rounded-xs border border-black/10 ${c}`} />
          ))}
        </div>

        <h3 className="ml-1 mt-2.5 leading-[22px]">Recent Used Colors</h3>
        <button type="button" aria-label="White" className="mt-[5px] block size-[22px] border border-[#5a87a5] bg-white" />
      </div>

      <div className="mt-6 flex h-[74px] items-center border-t border-[#ececec] pl-[7px] pr-[3px]">
        <IconButton label="Pick from screen" className="w-7">
          <svg width="26" height="26" viewBox="0 0 24 24" aria-hidden="true">
            <path d="M13 8.500l3 3L7 20.500l-4 1.500 1.500-4z" fill="none" stroke="#222" strokeWidth="1.500" />
            <path d="M7 15l3 3-4 3-4.500 2.500L3 19z" fill="#222" />
            <path d="M11.500 6l1.500-1.500 2 1 2.500-3a3.800 3.800 0 0 1 5 5l-3 2.500 1 2L18 13.500z" fill="#222" />
          </svg>
        </IconButton>
        <div className="ml-[19px] flex h-[42px] w-[132px] items-center rounded-lg border-2 border-[#e4e4e4] pl-[7px]">
          <span className="size-6 shrink-0 bg-[#185990]" />
          <input aria-label="Hex value" value={hex} onChange={(e) => setHex(e.target.value)} className="w-full min-w-0 bg-transparent pl-[7px] pt-0.5 text-black outline-none" />
        </div>
        <button type="button" className="ml-auto flex items-center gap-2 whitespace-nowrap text-black">
          <span className="flex size-[30px] items-center justify-center rounded-full bg-[conic-gradient(#d02020,#f7c02c,#e8f53a,#62ee3c,#2fe8e0,#2fd0fa,#3450f0,#c030f0,#c83aa0,#d02020)]">
            <span className="size-3.5 rounded-full bg-white" />
          </span>
          More Colors
        </button>
      </div>

      <div className="flex h-[75px] items-center border-y border-[#ececec] pl-[9px]">
        <div className="flex gap-3">
          {GRADIENTS.map((g) => (
            <button key={g} type="button" aria-label="Gradient" className={`size-9 rounded-full bg-linear-to-r ${g}`} />
          ))}
        </div>
        <IconButton label="More gradients" className="ml-[9px] size-[42px] rounded-full bg-[#f2f2f2] text-[#333]">
          <svg width="22" height="6" fill="currentColor" aria-hidden="true"><circle cx="3" cy="3" r="2.500" /><circle cx="11" cy="3" r="2.500" /><circle cx="19" cy="3" r="2.500" /></svg>
        </IconButton>
      </div>
    </div>
  );
};

const App = () => (
  <div className="relative flex h-screen flex-col overflow-hidden bg-[#f5f5f5] font-['Open_Sans','Noto_Sans',sans-serif] text-base">
    <Header />
    <Ribbon />
    <div className="flex min-h-0 flex-1">
      <Canvas />
      <FormatPanel />
    </div>
    <StatusBar />

    {/* Floating layers sit over the canvas, the panel and the status bar */}
    <FloatingToolbar />
    <ColorPicker />
  </div>
);

export default App;
